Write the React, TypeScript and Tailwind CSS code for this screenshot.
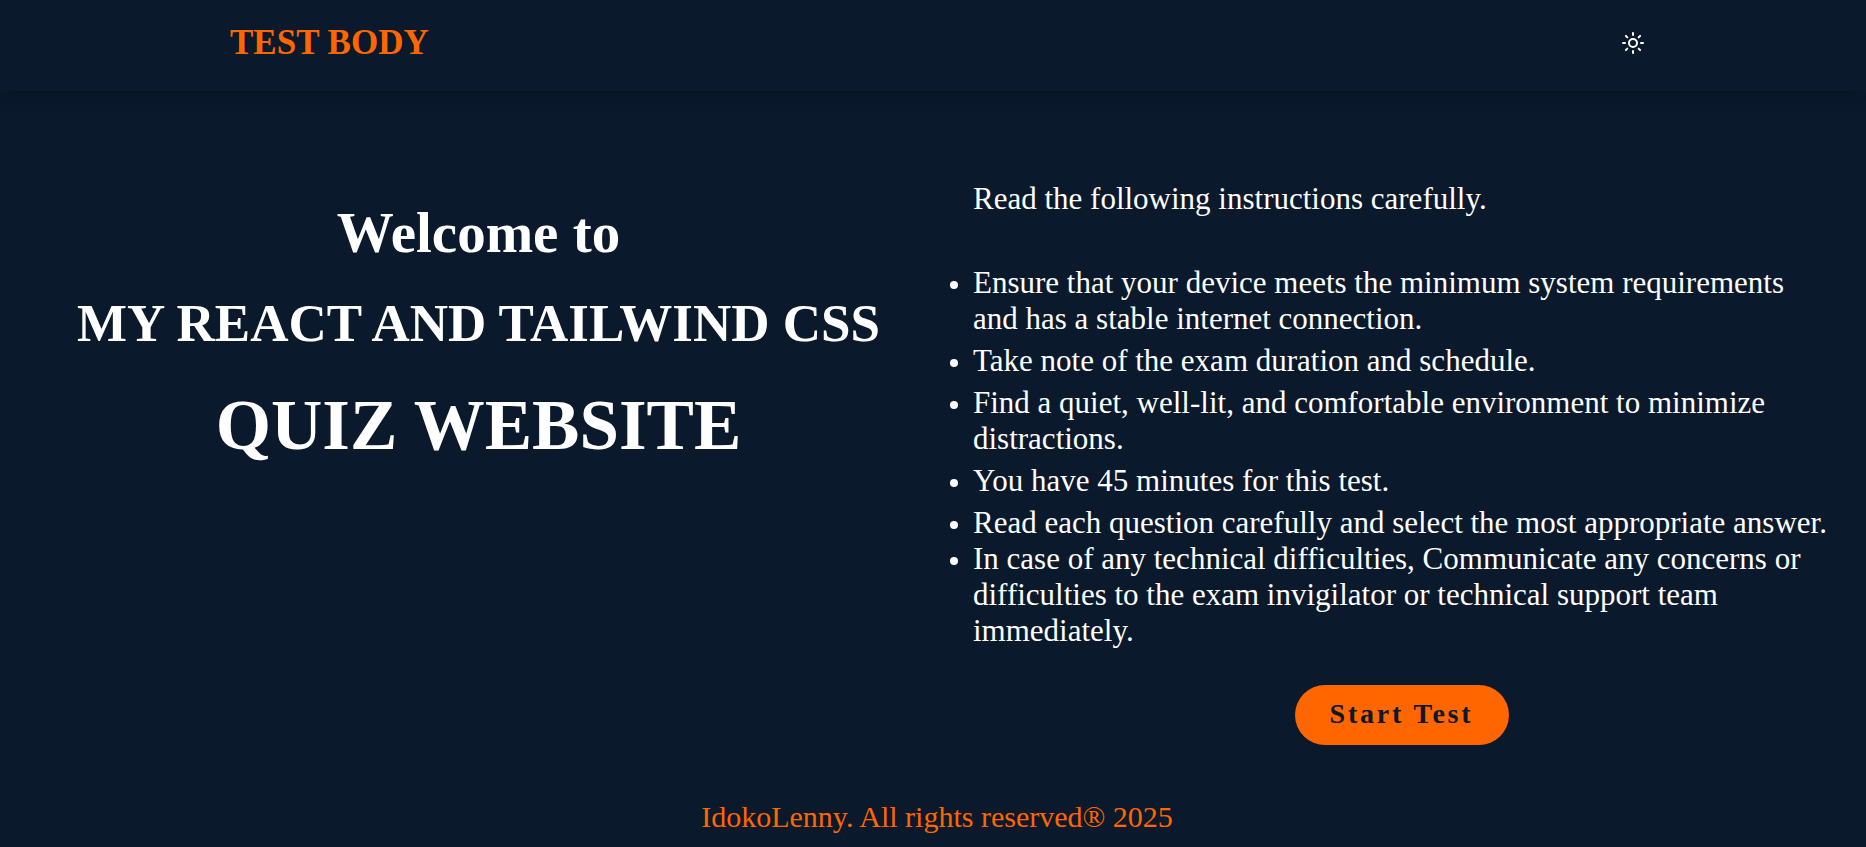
import { Sun } from "lucide-react";

const instructions = [
  "Ensure that your device meets the minimum system requirements and has a stable internet connection.",
  "Take note of the exam duration and schedule.",
  "Find a quiet, well-lit, and comfortable environment to minimize distractions.",
  "You have 45 minutes for this test.",
  "Read each question carefully and select the most appropriate answer.",
];

export default function App() {
  return (
    <div className="flex min-h-screen flex-col bg-[#0a192b] font-['Liberation_Serif',serif] text-white">
      <header className="flex h-[91px] items-center justify-between pr-[221px] pb-1.5 pl-[230px] shadow-[0_10px_15px_-3px_rgba(0,0,0,0.16)]">
        <a href="#" className="text-[35px] leading-10 font-bold text-[#ff6600]">
          TEST BODY
        </a>
        <button type="button" aria-label="Toggle theme">
          <Sun size={24} strokeWidth={2} />
        </button>
      </header>

      <main className="grid grid-cols-2 gap-[66px] pt-[90px] pr-9 pl-[50px]">
        <section className="flex flex-col items-center pt-5 text-center font-bold">
          <p className="text-[57px] leading-[64px]">Welcome to</p>
          <h1 className="mt-7 text-[53px] leading-[60px] whitespace-nowrap">
            MY REACT AND TAILWIND CSS
          </h1>
          <h2 className="mt-8 text-[71px] leading-[80px]">QUIZ WEBSITE</h2>
        </section>

        <section className="text-[31px] leading-9">
          <p>Read the following instructions carefully.</p>
          <ul className="mt-12 list-disc marker:text-[27px]">
            {instructions.map((text, i) => (
              <li key={text} className={i < 4 ? "mb-1.5" : ""}>
                {text}
              </li>
            ))}
            <li>
              In case of any technical difficulties, Communicate any concerns or difficulties to the
              exam invigilator or technical support team immediately.
            </li>
          </ul>
          <div className="mt-9 flex justify-center">
            <button
              type="button"
              className="h-[60px] w-[214px] rounded-full bg-[#ff6600] pb-0.5 text-[28px] font-bold tracking-widest text-[#0a192b]"
            >
              Start Test
            </button>
          </div>
        </section>
      </main>

      <footer className="mt-[54px] pl-2 text-center text-[30px] leading-9 text-[#ff6600]">
        IdokoLenny. All rights reserved® 2025
      </footer>
    </div>
  );
}
